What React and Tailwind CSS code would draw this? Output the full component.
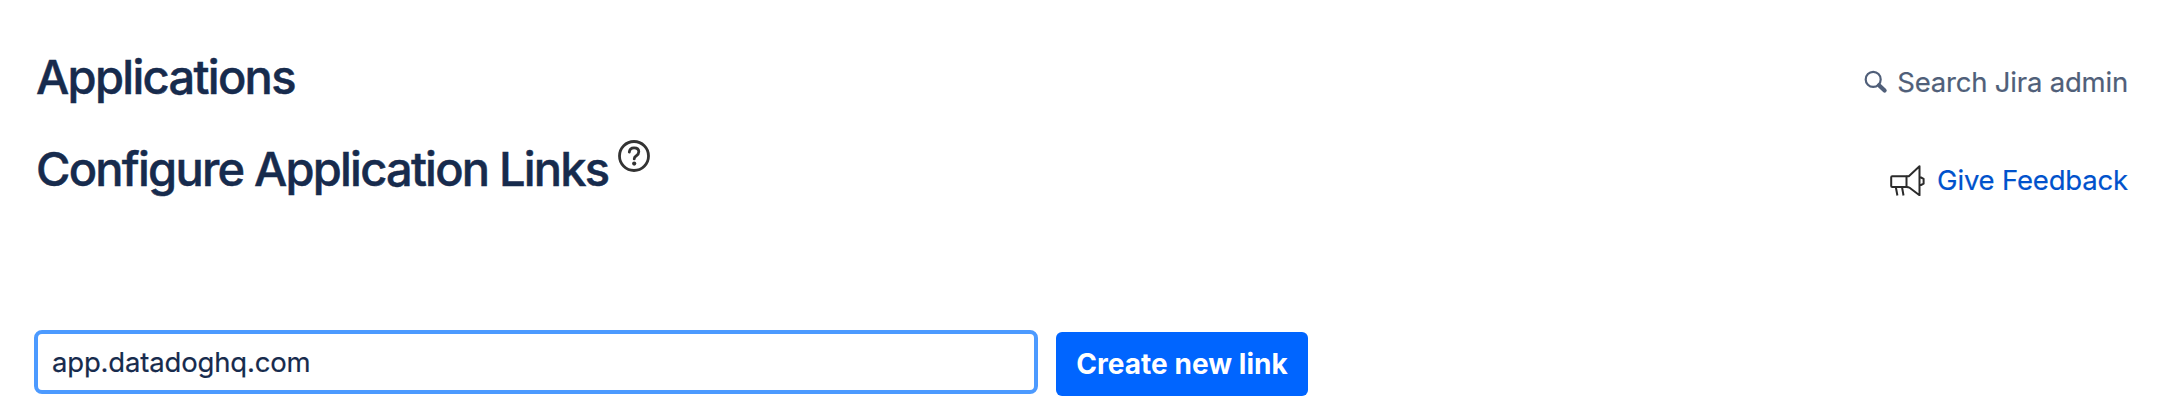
function SearchIcon() {
  return (
    <svg className="h-6 w-6 shrink-0" viewBox="0 0 24 24" fill="none" stroke="#505f79">
      <circle cx="9.2" cy="9.4" r="7.5" strokeWidth="2.2" />
      <path d="M15 15.2 20.6 20.6" strokeWidth="4.2" strokeLinecap="round" />
    </svg>
  );
}

function HelpIcon() {
  return (
    <svg className="-mt-px h-8 w-8 shrink-0" viewBox="0 0 32 32" fill="none" stroke="#333333">
      <circle cx="16" cy="16" r="14.5" strokeWidth="2.8" />
      <path d="M11.3 12.1c.2-2.7 2-4.3 4.8-4.3 2.8 0 4.7 1.6 4.7 4 0 1.9-.9 2.9-2.5 4-1.6 1-2.1 1.7-2.1 3.1" strokeWidth="2.8" strokeLinecap="round" />
      <circle cx="16.2" cy="23.6" r="2.1" fill="#333333" stroke="none" />
    </svg>
  );
}

function MegaphoneIcon() {
  return (
    <svg className="mt-px h-[31px] w-9 shrink-0" viewBox="0 0 36 31" fill="none" stroke="#2b2b2b" strokeWidth="2" strokeLinejoin="round">
      <path d="M16.5 11.2H2.2a1 1 0 0 0-1 1v8.8a1 1 0 0 0 1 1h14.3z" />
      <path d="M16.5 11.2h2.3L29.5 1.2v29L19.6 22.8c-.8-.6-1.5-.8-3.1-.8" />
      <path d="M29.5 12.5h1.5l2.6 1.3v4.9L31 20h-1.5" />
      <path d="M5.8 22l1.6 8.500M12 22l1.5 8.500" />
    </svg>
  );
}

export default function App() {
  return (
    <main className="h-[408px] w-[2170px] overflow-hidden bg-white pt-[49px] pr-[42px] pl-[34px] font-['Inter',sans-serif] text-[#172b4d]">
      <header className="flex h-[92px] items-start justify-between pl-0.5">
        <h1 className="text-[47px] leading-14 font-medium tracking-[-1.7px] whitespace-nowrap [-webkit-text-stroke:0.5px_#172b4d]">Applications</h1>
        <button className="mt-[13px] flex items-center gap-[9px] text-[27.5px] leading-10 tracking-[-0.2px] whitespace-nowrap text-[#505f79] [-webkit-text-stroke:0.2px_#505f79]">
          <SearchIcon />
          Search Jira admin
        </button>
      </header>
      <section className="flex h-[189px] items-start justify-between pl-0.5">
        <div className="flex items-start gap-[10px]">
          <h2 className="text-[47px] leading-14 font-medium tracking-[-1.78px] whitespace-nowrap [-webkit-text-stroke:0.5px_#172b4d]">Configure Application Links</h2>
          <HelpIcon />
        </div>
        <a href="#" className="mt-[19px] flex items-center gap-[11px] text-[27.5px] leading-10 tracking-[-0.18px] whitespace-nowrap text-[#0052cc] [-webkit-text-stroke:0.2px_#0052cc]">
          <MegaphoneIcon />
          Give Feedback
        </a>
      </section>
      <form className="flex items-start gap-[18px]">
        <input
          defaultValue="app.datadoghq.com"
          className="h-16 w-[1004px] rounded-[8px] border-4 border-[#4c9aff] bg-white px-3.5 text-[27.5px] tracking-[-0.17px] text-[#172b4d] outline-none [-webkit-text-stroke:0.2px_#172b4d]"
        />
        <button type="button" className="mt-0.5 h-16 w-[252px] rounded-md bg-[#0065ff] text-[28px] font-[650] tracking-[0.05px] whitespace-nowrap text-white">
          Create new link
        </button>
      </form>
    </main>
  );
}
